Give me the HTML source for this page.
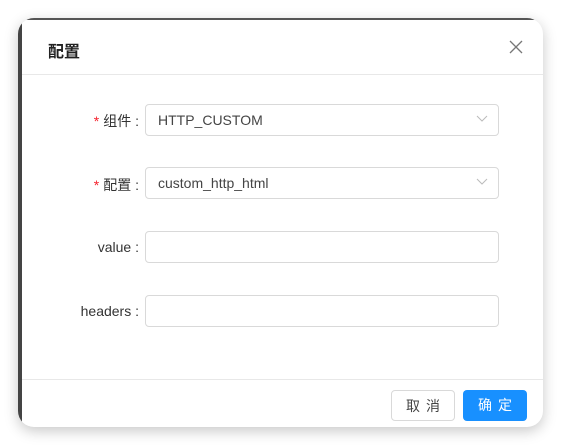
<!DOCTYPE html>
<html><head><meta charset="utf-8"><style>
body{margin:0;width:562px;height:445px;background:#fff;position:relative;overflow:hidden;font-family:"Liberation Sans","Noto Sans CJK SC",sans-serif}
.win{position:absolute;left:18px;top:18px;width:525px;height:409px;border-radius:16px;overflow:hidden;background:#fff;box-shadow:0 4px 14px rgba(0,0,0,.22)}
.strip{position:absolute;left:0;top:0;width:4px;height:100%;background:#444}
.topl{position:absolute;left:0;top:0;width:100%;height:2px;background:#555}
.hdr{position:absolute;left:4px;right:0;top:2px;height:54px;border-bottom:1px solid #e8e8e8}
.title{position:absolute;left:26px;top:18px;font-size:16px;color:#222;font-weight:bold}
.x{position:absolute;right:20px;top:20px}
.lbl{position:absolute;right:404px;font-size:14px;color:#333;text-align:right;white-space:nowrap}
.lbl b{color:#f5222d;font-weight:normal;margin-right:4px}
.inp{position:absolute;left:127px;width:352px;height:30px;border:1px solid #d9d9d9;border-radius:4px;font-size:14px;color:#444;line-height:30px;padding-left:12px;box-sizing:content-box;width:340px}
.arr{position:absolute;right:10px;top:10px}
.ftr{position:absolute;left:4px;right:0;top:361px;border-top:1px solid #e8e8e8;height:48px}
.btn{position:absolute;top:372px;width:62px;height:30px;border-radius:4px;font-size:14px;text-align:center;line-height:30px;letter-spacing:6px;text-indent:6px}
</style></head><body>
<div class="win">
<div class="strip"></div><div class="topl"></div>
<div class="hdr"><div class="title">配置</div>
<svg class="x" width="14" height="14" viewBox="0 0 14 14"><path d="M1 1L13 13M13 1L1 13" stroke="#777" stroke-width="1.3"/></svg></div>
<div class="lbl" style="top:93px"><b>*</b>组件 :</div>
<div class="inp" style="top:86px">HTTP_CUSTOM<svg class="arr" width="12" height="8" viewBox="0 0 12 8"><path d="M1 1L6 6L11 1" stroke="#bbb" fill="none"/></svg></div>
<div class="lbl" style="top:157px"><b>*</b>配置 :</div>
<div class="inp" style="top:149px">custom_http_html<svg class="arr" width="12" height="8" viewBox="0 0 12 8"><path d="M1 1L6 6L11 1" stroke="#bbb" fill="none"/></svg></div>
<div class="lbl" style="top:221px">value :</div>
<div class="inp" style="top:213px"></div>
<div class="lbl" style="top:285px">headers :</div>
<div class="inp" style="top:277px"></div>
<div class="ftr"></div>
<div class="btn" style="left:373px;border:1px solid #d9d9d9;color:#444;box-sizing:border-box;width:64px;height:31px">取消</div>
<div class="btn" style="left:445px;width:64px;height:31px;background:#1890ff;color:#fff">确定</div>
</div>
</body></html>
